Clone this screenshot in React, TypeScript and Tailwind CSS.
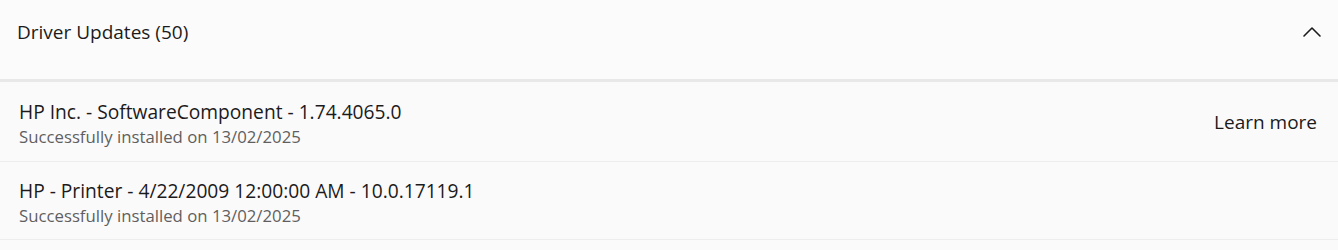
import { ChevronUp } from "lucide-react";

type DriverUpdate = {
  name: string;
  status: string;
  learnMore?: boolean;
};

const updates: DriverUpdate[] = [
  { name: "HP Inc. - SoftwareComponent - 1.74.4065.0", status: "Successfully installed on 13/02/2025", learnMore: true },
  { name: "HP - Printer - 4/22/2009 12:00:00 AM - 10.0.17119.1", status: "Successfully installed on 13/02/2025" },
];

const UpdateRow = ({ update, height }: { update: DriverUpdate; height: string }) => {
  return (
    <div className={`flex items-center justify-between ${height} pl-[19px] pr-[21px] bg-[#fbfafb] border-b border-[#ededed]`}>
      <div className="flex flex-col mt-[4px]">
        <p className="text-[19.2px] leading-[24px] text-[#1b1b1b]">{update.name}</p>
        <p className="text-[16.75px] leading-[22px] mt-[2px] text-[#5f5f5f]">{update.status}</p>
      </div>
      {update.learnMore && (
        <button className="text-[19px] mt-[2px] text-[#1b1b1b] cursor-pointer hover:underline">Learn more</button>
      )}
    </div>
  );
};

export default function App() {
  return (
    <div className="w-[1338px] h-[250px] bg-[#fbfafb] font-['Open_Sans',sans-serif]">
      <div className="flex items-center justify-between h-[82px] pl-[17px] pr-[10px] pb-[15px] bg-[#fcfbfc] border-b-[3px] border-[#e8e8e8]">
        <p className="text-[19px] text-[#1b1b1b]">Driver Updates (50)</p>
        <ChevronUp className="text-[#1b1b1b]" size={32} strokeWidth={1.2} />
      </div>
      <UpdateRow update={updates[0]} height="h-[80px]" />
      <UpdateRow update={updates[1]} height="h-[78px]" />
    </div>
  );
}
